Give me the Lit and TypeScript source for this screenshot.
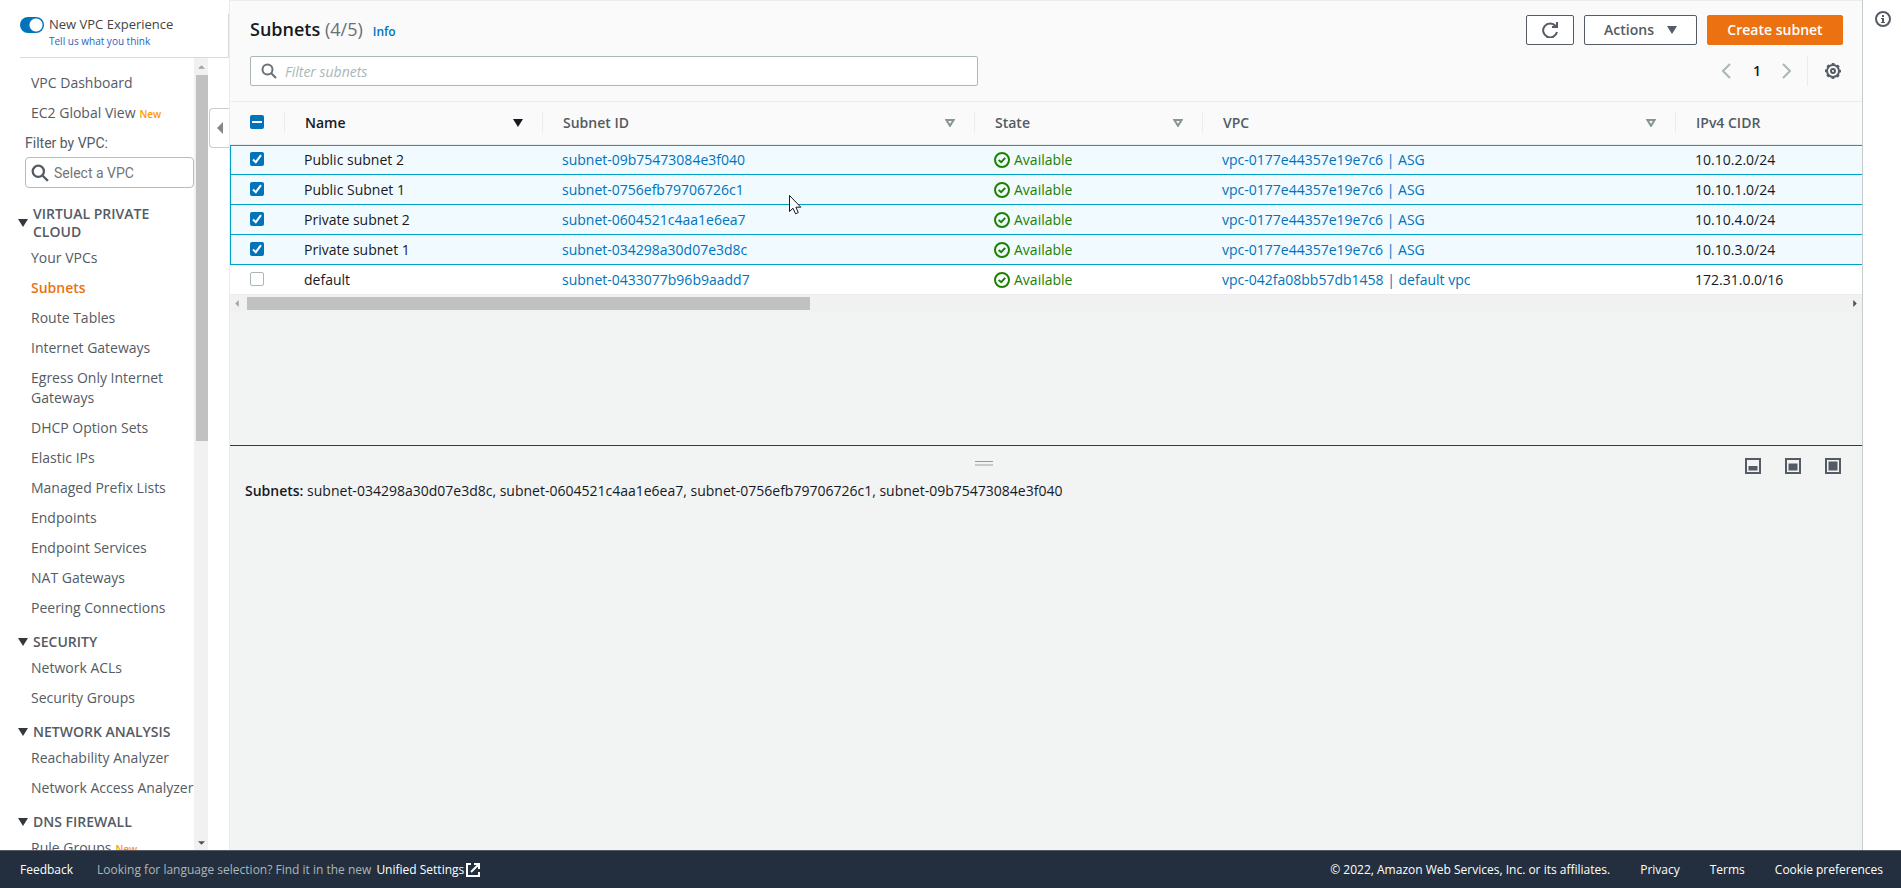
import { LitElement, html, svg, css, nothing } from "lit";
import { customElement, property, state } from "lit/decorators.js";
import { classMap } from "lit/directives/class-map.js";

interface Subnet {
  name: string;
  id: string;
  vpc: string;
  cidr: string;
  selected: boolean;
}

interface NavItem {
  label: string;
  isNew?: boolean;
  active?: boolean;
}

const searchIcon = (stroke: number) => svg`
  <svg class="icon" viewBox="0 0 16 16" width="16" height="16" fill="none" stroke="currentColor" stroke-width=${stroke} aria-hidden="true">
    <circle cx="6.5" cy="6.5" r="5" /><path d="M10.2 10.2 L15 15" />
  </svg>`;

const caret = svg`<svg viewBox="0 0 10 8" width="10" height="8" aria-hidden="true"><path d="M0 0H10L5 8Z" fill="currentColor" /></svg>`;
const openCaret = svg`<svg viewBox="0 0 10 8" width="10" height="8" aria-hidden="true"><path d="M1.4 1H8.6L5 6.8Z" fill="none" stroke="currentColor" stroke-width="2" /></svg>`;

@customElement("vpc-sidebar")
export class VpcSidebar extends LitElement {
  static styles = css`
    :host { display: flex; flex-direction: column; min-height: 0; width: 229px; flex: none; background: #fff; color: #545b64; }
    .head { display: flex; align-items: flex-start; gap: 5px; margin: 14px 0 0 20px; height: 43px; flex: none; border-bottom: 1px solid #d5dbdb; border-right: 1px solid #d5dbdb; color: #444; font-size: 13px; }
    .switch { appearance: none; margin: 3px 0 0; width: 24px; height: 16px; border-radius: 8px; flex: none; background: radial-gradient(circle at 16px 8px, #fff 6px, #0073bb 7px); }
    .head label { display: block; line-height: 20px; }
    .head a { display: block; font-size: 10px; line-height: 14px; color: #2b5fc0; text-decoration: none; }
    .body { display: flex; flex: 1; min-height: 0; }
    nav { flex: 1; min-width: 0; overflow: hidden; padding-top: 10px; font-size: 14px; }
    ul { list-style: none; margin: 0; padding: 0; }
    li { padding: 5px 0 5px 31px; line-height: 20px; }
    li a { color: inherit; text-decoration: none; }
    .active { color: #ec7211; font-weight: 600; }
    .new { color: #ff9900; font-size: 10px; font-weight: 600; margin-left: 4px; }
    .filter { display: block; padding: 4px 0 4px 25px; line-height: 20px; font-family: Roboto, sans-serif; font-size: 14px; }
    .box { display: flex; align-items: center; gap: 5px; box-sizing: border-box; height: 31px; margin: 0 0 7px 25px; padding: 0 5px; border: 1px solid #bbb; border-radius: 4px; color: #545b64; }
    .box input { flex: 1; min-width: 0; border: 0; padding: 0; outline: 0; background: none; font: 14px Roboto, sans-serif; }
    .box input::placeholder { color: #757575; }
    .box .icon { width: 18px; height: 18px; }
    h2 { display: flex; align-items: center; gap: 5px; margin: 0; padding: 10px 20px 2px 18px; font-size: 14px; line-height: 18px; font-weight: 600; }
    h2 span { flex: none; max-width: 142px; }
    h2 svg { flex: none; color: #33383f; }
    .scroll { width: 14px; flex: none; display: flex; flex-direction: column; align-items: center; background: #f1f1f1; padding: 7px 0 5px; box-sizing: border-box; }
    .thumb { width: 12px; height: 366px; margin: 6px 0 auto 2px; background: #c1c1c1; }
    .gutter { width: 21px; flex: none; padding-top: 50px; }
    .gutter button { display: flex; align-items: center; justify-content: center; width: 20px; height: 40px; margin: 0 0 0 1px; padding: 0; border: 1px solid #ccc; border-right: 0; border-radius: 4px 0 0 4px; background: #fff; color: #888; }
  `;

  private sections: { title: string; items: NavItem[] }[] = [
    {
      title: "VIRTUAL PRIVATE CLOUD",
      items: [
        { label: "Your VPCs" }, { label: "Subnets", active: true }, { label: "Route Tables" },
        { label: "Internet Gateways" }, { label: "Egress Only Internet Gateways" }, { label: "DHCP Option Sets" },
        { label: "Elastic IPs" }, { label: "Managed Prefix Lists" }, { label: "Endpoints" },
        { label: "Endpoint Services" }, { label: "NAT Gateways" }, { label: "Peering Connections" },
      ],
    },
    { title: "SECURITY", items: [{ label: "Network ACLs" }, { label: "Security Groups" }] },
    { title: "NETWORK ANALYSIS", items: [{ label: "Reachability Analyzer" }, { label: "Network Access Analyzer" }] },
    { title: "DNS FIREWALL", items: [{ label: "Rule Groups", isNew: true }] },
  ];

  private list(items: NavItem[]) {
    return html`<ul>${items.map((i) => html`
      <li><a href="#" class=${classMap({ active: !!i.active })}>${i.label}</a>${i.isNew ? html`<span class="new">New</span>` : nothing}</li>`)}</ul>`;
  }

  render() {
    return html`
      <div class="head">
        <input class="switch" type="checkbox" role="switch" id="experience" checked />
        <div><label for="experience">New VPC Experience</label><a href="#">Tell us what you think</a></div>
      </div>
      <div class="body">
        <nav aria-label="VPC">
          ${this.list([{ label: "VPC Dashboard" }, { label: "EC2 Global View", isNew: true }])}
          <label class="filter" for="vpc">Filter by VPC:</label>
          <div class="box">${searchIcon(2)}<input id="vpc" type="text" placeholder="Select a VPC" /></div>
          ${this.sections.map((s) => html`<h2>${caret}<span>${s.title}</span></h2>${this.list(s.items)}`)}
        </nav>
        <div class="scroll">
          <svg viewBox="0 0 8 4" width="7" height="4"><path d="M0 4H8L4 0Z" fill="#a3a3a3" /></svg>
          <div class="thumb"></div>
          <svg viewBox="0 0 8 4" width="7" height="4"><path d="M0 0H8L4 4Z" fill="#505050" /></svg>
        </div>
        <div class="gutter">
          <button type="button" aria-label="Collapse navigation"><svg viewBox="0 0 6 12" width="6" height="12"><path d="M6 0V12L0 6Z" fill="currentColor" /></svg></button>
        </div>
      </div>`;
  }
}

@customElement("subnet-table")
export class SubnetTable extends LitElement {
  @property({ attribute: false }) subnets: Subnet[] = [];

  static styles = css`
    :host { display: block; overflow: hidden; font-size: 14px; color: #16191f; }
    table { width: 100%; table-layout: fixed; border-collapse: separate; border-spacing: 0; background: #fff; }
    .c-check { width: 54px; } .c-name { width: 258px; } .c-id { width: 432px; } .c-state { width: 228px; } .c-vpc { width: 473px; }
    th { height: 44px; padding: 10px 0 0; box-sizing: border-box; vertical-align: top; background: #fafafa; border-top: 1px solid #eaeded; border-bottom: 1px solid #eaeded; text-align: left; font-weight: 600; color: #545b64; }
    .cell { display: flex; align-items: center; justify-content: space-between; height: 21px; padding: 0 19px 0 20px; border-left: 1px solid #eaeded; }
    .cell svg { color: #879596; }
    th.check .cell { border: 0; }
    .sorted, .sorted svg { color: #16191f; }
    td { height: 30px; box-sizing: border-box; padding: 0 20px; line-height: 20px; white-space: nowrap; border-bottom: 1px solid #eaeded; }
    .selected td { background: #f1faff; border-bottom-color: #00a1c9; }
    .selected:first-child td { border-top: 1px solid #00a1c9; }
    .selected td:first-child { border-left: 1px solid #00a1c9; padding-left: 19px; }
    td a { color: #0073bb; text-decoration: none; }
    .state { display: flex; align-items: center; gap: 4px; color: #1d8102; }
    input { appearance: none; display: block; margin: 0 0 2px; width: 14px; height: 14px; box-sizing: border-box; border: 1px solid #aab7b8; border-radius: 2px; background: #fff; flex: none; }
    input:checked { border: 0; background: #0073bb url("data:image/svg+xml,%3Csvg xmlns='http://www.w3.org/2000/svg' viewBox='0 0 14 14'%3E%3Cpath d='M3 7.5L5.8 10.2L11 3.2' fill='none' stroke='white' stroke-width='2'/%3E%3C/svg%3E"); }
    input:indeterminate { border: 0; background: linear-gradient(#fff, #fff) center / 10px 2px no-repeat #0073bb; }
  `;

  private heading(label: string, extra = "") {
    const icon = extra === "sorted" ? caret : extra === "last" ? nothing : openCaret;
    return html`<th scope="col" class=${extra}><div class="cell"><span>${label}</span>${icon}</div></th>`;
  }

  render() {
    return html`
      <table>
        <colgroup><col class="c-check" /><col class="c-name" /><col class="c-id" /><col class="c-state" /><col class="c-vpc" /><col /></colgroup>
        <thead>
          <tr>
            <th class="check"><div class="cell"><input type="checkbox" aria-label="Select all subnets" .indeterminate=${true} /></div></th>
            ${this.heading("Name", "sorted")}${this.heading("Subnet ID")}${this.heading("State")}${this.heading("VPC")}${this.heading("IPv4 CIDR", "last")}
          </tr>
        </thead>
        <tbody>${this.subnets.map((s) => html`
          <tr class=${classMap({ selected: s.selected })}>
            <td><input type="checkbox" aria-label=${"Select " + s.name} .checked=${s.selected} /></td>
            <td>${s.name}</td>
            <td><a href="#">${s.id}</a></td>
            <td><span class="state"><svg viewBox="0 0 16 16" width="16" height="16" fill="none" stroke="currentColor" stroke-width="2" aria-hidden="true"><circle cx="8" cy="8" r="7" /><path d="M4.6 8L7.2 10.2L11.2 5.8" /></svg>Available</span></td>
            <td><a href="#">${s.vpc}</a></td>
            <td>${s.cidr}</td>
          </tr>`)}</tbody>
      </table>`;
  }
}

@customElement("console-footer")
export class ConsoleFooter extends LitElement {
  static styles = css`
    :host { display: flex; align-items: center; flex: none; height: 38px; box-sizing: border-box; padding: 0 18px 0 20px; border-top: 1px solid #545b64; background: #232f3e; color: #fff; font-size: 12px; white-space: nowrap; }
    a { color: inherit; text-decoration: none; font-weight: 500; }
    .hint { margin-left: 24px; color: #aab7b8; }
    .settings { display: flex; align-items: center; gap: 2px; margin-left: 5px; }
    .right { display: flex; gap: 30px; margin-left: auto; }
    .legal { font-weight: 500; }
  `;

  render() {
    return html`
      <a href="#">Feedback</a>
      <span class="hint">Looking for language selection? Find it in the new</span>
      <a class="settings" href="#">Unified Settings<svg viewBox="0 0 14 14" width="14" height="14" fill="none" stroke="#fff" stroke-width="2" aria-hidden="true"><path d="M5 1H1V13H13V9M8 1H13V6M13 1L5 9" /></svg></a>
      <div class="right"><span class="legal">© 2022, Amazon Web Services, Inc. or its affiliates.</span><a href="#">Privacy</a><a href="#">Terms</a><a href="#">Cookie preferences</a></div>`;
  }
}

@customElement("app-root")
export class AppRoot extends LitElement {
  @state() private subnets: Subnet[] = [
    { name: "Public subnet 2", id: "subnet-09b75473084e3f040", vpc: "vpc-0177e44357e19e7c6 | ASG", cidr: "10.10.2.0/24", selected: true },
    { name: "Public Subnet 1", id: "subnet-0756efb79706726c1", vpc: "vpc-0177e44357e19e7c6 | ASG", cidr: "10.10.1.0/24", selected: true },
    { name: "Private subnet 2", id: "subnet-0604521c4aa1e6ea7", vpc: "vpc-0177e44357e19e7c6 | ASG", cidr: "10.10.4.0/24", selected: true },
    { name: "Private subnet 1", id: "subnet-034298a30d07e3d8c", vpc: "vpc-0177e44357e19e7c6 | ASG", cidr: "10.10.3.0/24", selected: true },
    { name: "default", id: "subnet-0433077b96b9aadd7", vpc: "vpc-042fa08bb57db1458 | default vpc", cidr: "172.31.0.0/16", selected: false },
  ];

  static styles = css`
    :host { display: flex; flex-direction: column; height: 100vh; font-family: "Open Sans", "Noto Sans", sans-serif; font-size: 14px; color: #16191f; }
    .page { display: flex; flex: 1; min-height: 0; }
    main { position: relative; display: flex; flex-direction: column; flex: 1; min-width: 0; border-left: 1px solid #eaeded; background: #f2f3f3; }
    .top { padding: 14px 19px 15px 20px; border-top: 1px solid #eaeded; background: #fafafa; }
    .row { display: flex; align-items: center; }
    h1 { margin: 0 0 2px; font-size: 18px; line-height: 24px; font-weight: 600; }
    h1 span { font-weight: 400; color: #687078; }
    .info { margin: 3px 0 0 10px; font-size: 12px; font-weight: 600; color: #0073bb; text-decoration: none; }
    .actions { display: flex; gap: 10px; margin-left: auto; }
    .btn { display: flex; align-items: center; justify-content: center; gap: 13px; height: 30px; padding: 0 19px; box-sizing: border-box; border: 1px solid #545b64; border-radius: 2px; background: #fff; color: #545b64; font: 600 14px/20px "Open Sans", "Noto Sans", sans-serif; white-space: nowrap; }
    .refresh { width: 48px; padding: 0; }
    .menu { width: 113px; }
    .primary { width: 136px; border-color: #ec7211; background: #ec7211; color: #fff; }
    .tools { margin-top: 11px; justify-content: space-between; }
    .search { display: flex; align-items: center; gap: 8px; width: 100%; max-width: 728px; height: 30px; box-sizing: border-box; padding: 0 10px; border: 1px solid #aab7b8; border-radius: 2px; background: #fff; color: #687078; }
    .search input { flex: 1; min-width: 0; border: 0; padding: 0; outline: 0; background: none; font: 14px "Open Sans", "Noto Sans", sans-serif; }
    .search input::placeholder { font-style: italic; color: #aab7b8; }
    .pager { display: flex; align-items: center; height: 30px; }
    .plain { display: flex; padding: 0; border: 0; background: none; color: #aab7b8; font: 600 14px/20px "Open Sans", "Noto Sans", sans-serif; }
    .number { margin: 0 21px 0 22px; color: #16191f; }
    .gear { height: 30px; align-items: center; margin-left: 16px; padding: 0 2px 0 17px; border-left: 1px solid #eaeded; color: #545b64; }
    .hscroll { display: flex; align-items: center; flex: none; height: 17px; padding: 0 5px; background: #f1f1f1; }
    .thumb { width: 34.7%; height: 13px; margin: 0 auto 0 8px; background: #c1c1c1; }
    .split { flex: 1; min-height: 0; margin-top: 133px; padding: 12px 21px 0 15px; border-top: 1px solid #2b3e48; }
    .bar { display: grid; grid-template-columns: 1fr 118px; }
    .grip { justify-self: center; width: 18px; height: 2px; margin-top: 3px; border-top: 1px solid #999; border-bottom: 2px solid #c8caca; }
    .panes { display: flex; justify-content: flex-end; gap: 24px; }
    .panes button { display: flex; padding: 0; border: 0; background: none; color: #545b64; }
    .split p { margin: 7px 0 0; line-height: 20px; }
    b { font-weight: 600; }
    .help { width: 38px; flex: none; border-left: 1px solid #c5cccc; background: #fff; }
    .help button { margin: 11px 0 0 12px; }
    .pointer { position: absolute; left: 559px; top: 195px; }
  `;

  private paneIcon(top: number) {
    return svg`<svg viewBox="0 0 16 16" width="16" height="16" aria-hidden="true"><rect x="1" y="1" width="14" height="14" fill="none" stroke="currentColor" stroke-width="2" /><rect x="3.5" y=${top} width="9" height=${12.5 - top} fill="currentColor" /></svg>`;
  }

  render() {
    const chosen = this.subnets.filter((s) => s.selected);
    return html`
      <div class="page">
        <vpc-sidebar></vpc-sidebar>
        <main>
          <div class="top">
            <div class="row">
              <h1>Subnets <span>(${chosen.length}/${this.subnets.length})</span></h1>
              <a class="info" href="#">Info</a>
              <div class="actions">
                <button class="btn refresh" type="button" aria-label="Refresh"><svg viewBox="0 0 16 16" width="16" height="16" fill="none" stroke="currentColor" stroke-width="2"><path d="M15 10A7 7 0 1 1 13.6 4" /><path d="M15 0V5H10" /></svg></button>
                <button class="btn menu" type="button">Actions ${caret}</button>
                <button class="btn primary" type="button">Create subnet</button>
              </div>
            </div>
            <div class="row tools">
              <label class="search">${searchIcon(2)}<input type="text" aria-label="Filter subnets" placeholder="Filter subnets" /></label>
              <div class="pager">
                <button class="plain" type="button" aria-label="Previous page"><svg viewBox="0 0 9 16" width="9" height="16" fill="none" stroke="currentColor" stroke-width="2"><path d="M8 1L1 8L8 15" /></svg></button>
                <button class="plain number" type="button">1</button>
                <button class="plain" type="button" aria-label="Next page"><svg viewBox="0 0 9 16" width="9" height="16" fill="none" stroke="currentColor" stroke-width="2"><path d="M1 1L8 8L1 15" /></svg></button>
                <button class="plain gear" type="button" aria-label="Preferences"><svg viewBox="0 0 16 16" width="16" height="16" fill="none" stroke="currentColor"><circle cx="8" cy="8" r="6" stroke-width="2" /><circle cx="8" cy="8" r="7.2" stroke-width="1.6" stroke-dasharray="2.8 2.85" stroke-dashoffset="1.4" /><circle cx="8" cy="8" r="2" stroke-width="2" /></svg></button>
              </div>
            </div>
          </div>
          <subnet-table .subnets=${this.subnets}></subnet-table>
          <div class="hscroll">
            <svg viewBox="0 0 4 8" width="4" height="7"><path d="M4 0V8L0 4Z" fill="#a3a3a3" /></svg>
            <div class="thumb"></div>
            <svg viewBox="0 0 4 8" width="4" height="7"><path d="M0 0V8L4 4Z" fill="#505050" /></svg>
          </div>
          <section class="split">
            <div class="bar">
              <div class="grip"></div>
              <div class="panes">
                <button type="button" aria-label="Small panel">${this.paneIcon(8)}</button>
                <button type="button" aria-label="Half panel">${this.paneIcon(5.5)}</button>
                <button type="button" aria-label="Full panel">${this.paneIcon(3.5)}</button>
              </div>
            </div>
            <p><b>Subnets:</b> ${chosen.map((s) => s.id).reverse().join(", ")}</p>
          </section>
          <svg class="pointer" viewBox="0 0 13 20" width="13" height="20" aria-hidden="true"><path d="M.5 .5V16.5L4 13.2L6.5 18.8L9.3 17.6L6.9 12.2H11.8Z" fill="#fff" stroke="#16191f" /></svg>
        </main>
        <aside class="help"><button class="plain" type="button" aria-label="Help"><svg viewBox="0 0 16 16" width="16" height="16" aria-hidden="true"><circle cx="8" cy="8" r="7" fill="none" stroke="#545b64" stroke-width="2" /><path d="M7 4H9V6H7ZM6 7H9V11H10V12H6V11H7V8H6Z" fill="#545b64" /></svg></button></aside>
      </div>
      <console-footer></console-footer>`;
  }
}
